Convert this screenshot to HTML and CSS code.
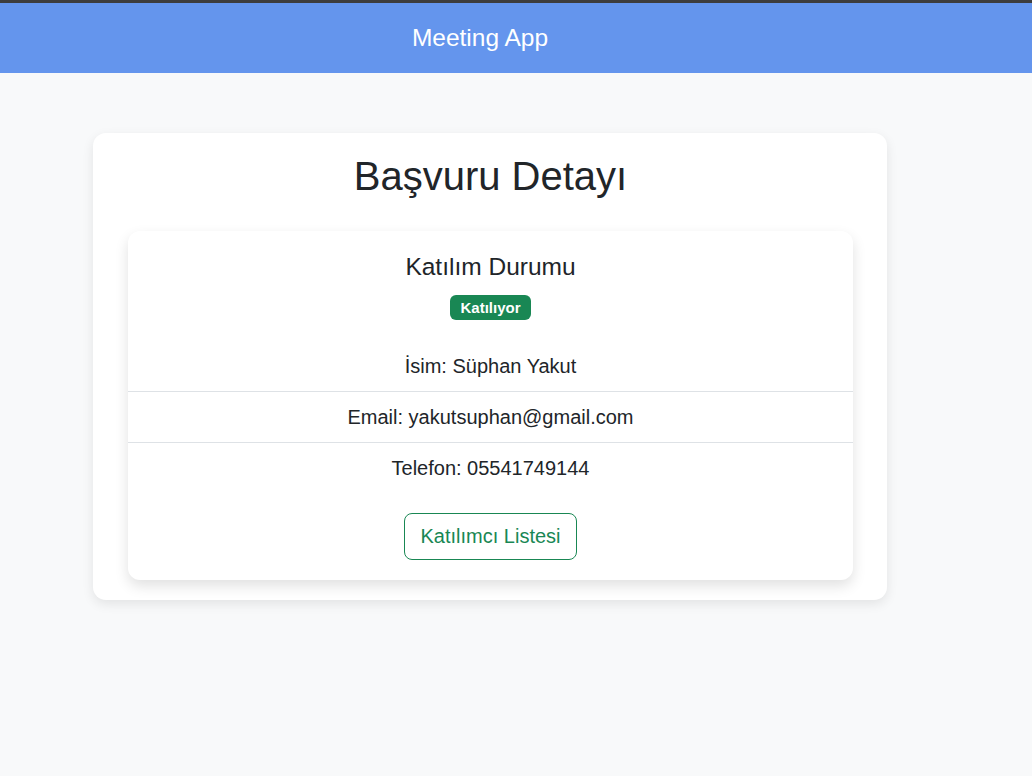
FILE: index.html
```html
<!DOCTYPE html>
<html lang="tr">
<head>
<meta charset="utf-8">
<title>Meeting App</title>
<link rel="stylesheet" href="styles.css">
</head>
<body>
<div class="topline"></div>
<header class="navbar">
  <span class="brand">Meeting App</span>
</header>
<main class="main">
  <section class="outer-card">
    <h1 class="title">Başvuru Detayı</h1>
    <div class="inner-card">
      <h4 class="status-title">Katılım Durumu</h4>
      <div class="badge-row"><span class="badge">Katılıyor</span></div>
      <ul class="info-list">
        <li class="info-item">İsim: Süphan Yakut</li>
        <li class="info-item">Email: yakutsuphan@gmail.com</li>
        <li class="info-item">Telefon: 05541749144</li>
      </ul>
      <div class="actions">
        <button class="btn-outline">Katılımcı Listesi</button>
      </div>
    </div>
  </section>
</main>
</body>
</html>
```

FILE: styles.css
```css
* { box-sizing: border-box; }
html, body {
  margin: 0;
  padding: 0;
  background: #f8f9fa;
  font-family: "Liberation Sans", Arial, sans-serif;
  color: #212529;
}
.topline {
  height: 3px;
  background: #3d3d3d;
}
.navbar {
  height: 70px;
  background: #6495ed;
  display: flex;
  align-items: center;
  justify-content: center;
  padding-right: 72px;
}
.brand {
  color: #fff;
  font-size: 24.5px;
  line-height: 1.2;
}
.main {
  padding: 60px 0 40px 93px;
}
.outer-card {
  width: 794px;
  background: #fff;
  border-radius: 13px;
  box-shadow: 0 4px 12px rgba(0, 0, 0, 0.09);
  padding: 20px 34px 20px 35px;
}
.title {
  margin: 0 0 31px;
  text-align: center;
  font-weight: 400;
  font-size: 40px;
  line-height: 47px;
}
.inner-card {
  background: #fff;
  border-radius: 12px;
  box-shadow: 0 6px 14px rgba(0, 0, 0, 0.12);
  padding: 21px 0 20px;
  text-align: center;
}
.status-title {
  margin: 0 0 14px;
  font-weight: 400;
  font-size: 24.5px;
  line-height: 1.2;
}
.badge-row {
  display: flex;
  justify-content: center;
  margin-bottom: 21px;
}
.badge {
  background: #198754;
  color: #fff;
  font-weight: 700;
  font-size: 15px;
  line-height: 1;
  padding: 5px 10px;
  border-radius: 6px;
}
.info-list {
  list-style: none;
  margin: 0;
  padding: 0;
}
.info-item {
  font-size: 20px;
  line-height: 30px;
  padding: 10px 16px;
  border-bottom: 1px solid #dee2e6;
}
.info-item:last-child {
  border-bottom: none;
}
.actions {
  display: flex;
  justify-content: center;
  margin-top: 20px;
}
.btn-outline {
  font-family: "Liberation Sans", Arial, sans-serif;
  font-size: 20px;
  line-height: 29px;
  padding: 8px 15px;
  color: #198754;
  background: transparent;
  border: 1px solid #198754;
  border-radius: 8px;
}
```
